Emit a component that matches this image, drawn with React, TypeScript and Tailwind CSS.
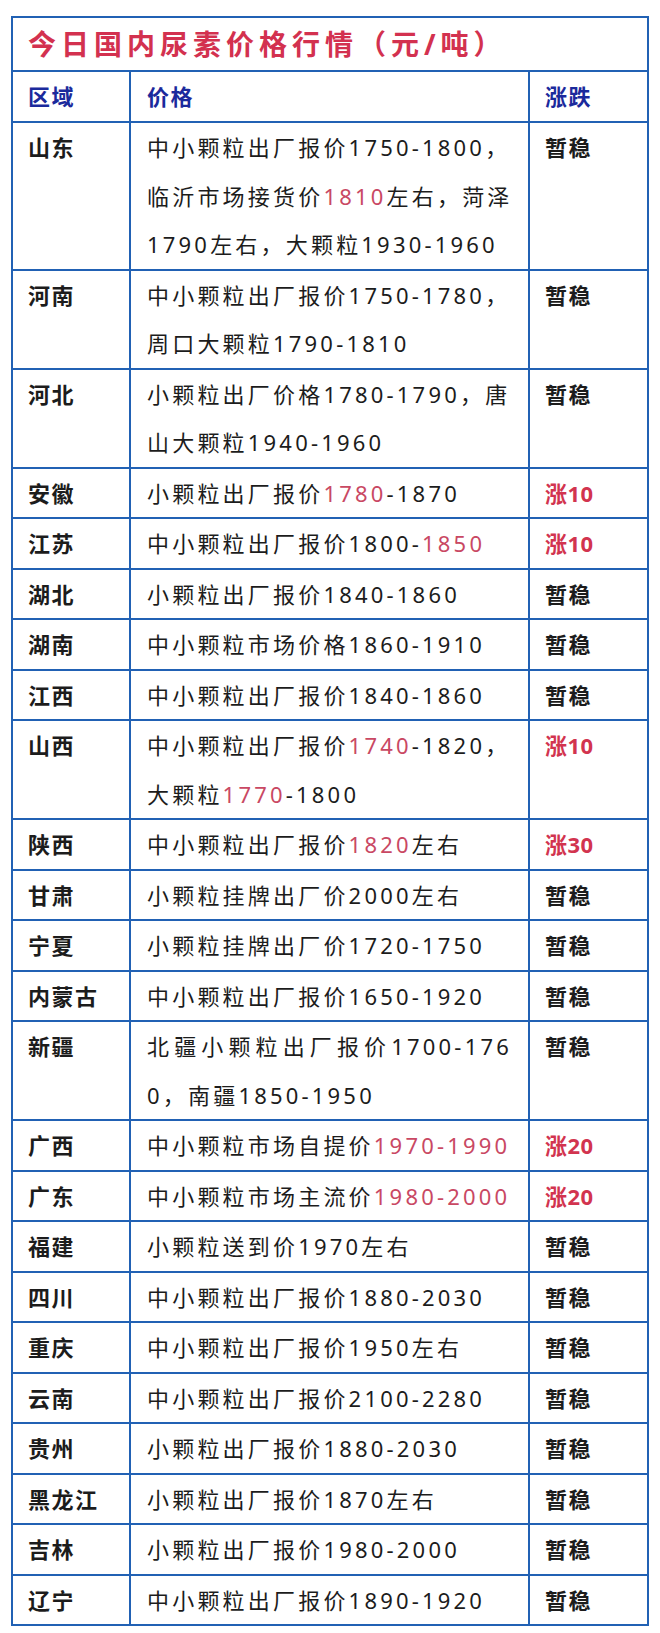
type Seg = string | { red: string };

interface Row {
  region: string;
  lines: Seg[][];
  change: string;
  justifyFirst?: boolean;
}

const rows: Row[] = [
  {
    region: "山东",
    lines: [
      ["中小颗粒出厂报价1750-1800，"],
      ["临沂市场接货价", { red: "1810" }, "左右，菏泽"],
      ["1790左右，大颗粒1930-1960"],
    ],
    change: "暂稳",
  },
  {
    region: "河南",
    lines: [["中小颗粒出厂报价1750-1780，"], ["周口大颗粒1790-1810"]],
    change: "暂稳",
  },
  {
    region: "河北",
    lines: [["小颗粒出厂价格1780-1790，唐"], ["山大颗粒1940-1960"]],
    change: "暂稳",
  },
  {
    region: "安徽",
    lines: [["小颗粒出厂报价", { red: "1780" }, "-1870"]],
    change: "涨10",
  },
  {
    region: "江苏",
    lines: [["中小颗粒出厂报价1800-", { red: "1850" }]],
    change: "涨10",
  },
  { region: "湖北", lines: [["小颗粒出厂报价1840-1860"]], change: "暂稳" },
  { region: "湖南", lines: [["中小颗粒市场价格1860-1910"]], change: "暂稳" },
  { region: "江西", lines: [["中小颗粒出厂报价1840-1860"]], change: "暂稳" },
  {
    region: "山西",
    lines: [
      ["中小颗粒出厂报价", { red: "1740" }, "-1820，"],
      ["大颗粒", { red: "1770" }, "-1800"],
    ],
    change: "涨10",
  },
  {
    region: "陕西",
    lines: [["中小颗粒出厂报价", { red: "1820" }, "左右"]],
    change: "涨30",
  },
  { region: "甘肃", lines: [["小颗粒挂牌出厂价2000左右"]], change: "暂稳" },
  { region: "宁夏", lines: [["小颗粒挂牌出厂价1720-1750"]], change: "暂稳" },
  { region: "内蒙古", lines: [["中小颗粒出厂报价1650-1920"]], change: "暂稳" },
  {
    region: "新疆",
    lines: [["北疆小颗粒出厂报价1700-176"], ["0，南疆1850-1950"]],
    change: "暂稳",
    justifyFirst: true,
  },
  {
    region: "广西",
    lines: [["中小颗粒市场自提价", { red: "1970-1990" }]],
    change: "涨20",
  },
  {
    region: "广东",
    lines: [["中小颗粒市场主流价", { red: "1980-2000" }]],
    change: "涨20",
  },
  { region: "福建", lines: [["小颗粒送到价1970左右"]], change: "暂稳" },
  { region: "四川", lines: [["中小颗粒出厂报价1880-2030"]], change: "暂稳" },
  { region: "重庆", lines: [["中小颗粒出厂报价1950左右"]], change: "暂稳" },
  { region: "云南", lines: [["中小颗粒出厂报价2100-2280"]], change: "暂稳" },
  { region: "贵州", lines: [["小颗粒出厂报价1880-2030"]], change: "暂稳" },
  { region: "黑龙江", lines: [["小颗粒出厂报价1870左右"]], change: "暂稳" },
  { region: "吉林", lines: [["小颗粒出厂报价1980-2000"]], change: "暂稳" },
  { region: "辽宁", lines: [["中小颗粒出厂报价1890-1920"]], change: "暂稳" },
];

function PriceLine({ segs, justify }: { segs: Seg[]; justify?: boolean }) {
  return (
    <div
      className={
        justify
          ? "h-[48.5px] leading-[48.5px] [text-align-last:justify]"
          : "h-[48.5px] whitespace-nowrap leading-[48.5px]"
      }
    >
      {segs.map((s, i) =>
        typeof s === "string" ? (
          <span key={i}>{s}</span>
        ) : (
          <span className="text-[#c94863]" key={i}>
            {s.red}
          </span>
        ),
      )}
    </div>
  );
}

export default function App() {
  return (
    <div
      className="min-h-[1633px] bg-white pt-[16px]"
      style={{ fontFamily: '"Noto Sans", "Noto Sans CJK SC", sans-serif' }}
    >
      <div className="ml-[11px] w-[638px] border-2 border-[#2161b4]">
        <div className="h-[52px] pl-[15px] text-[28px] font-bold leading-[52px] tracking-[5px] text-[#d3314f]">
          今日国内尿素价格行情（元/吨）
        </div>

        <div className="flex h-[51px] border-t-2 border-[#2161b4] text-[22px] font-bold leading-[49px] tracking-[1.5px] text-[#1b2a9c]">
          <div className="w-[118px] border-r-2 border-[#2161b4] pl-[15px]">
            区域
          </div>
          <div className="w-[399px] border-r-2 border-[#2161b4] pl-[16px]">
            价格
          </div>
          <div className="flex-1 pl-[15px]">涨跌</div>
        </div>

        {rows.map((row) => {
          const up = row.change.startsWith("涨");
          return (
            <div
              className="flex border-t-2 border-[#2161b4] text-[22px] text-[#1c1c1c]"
              key={row.region}
            >
              <div className="w-[118px] border-r-2 border-[#2161b4] pl-[15px] font-bold leading-[48.5px] tracking-[1.5px]">
                {row.region}
              </div>
              <div className="w-[399px] border-r-2 border-[#2161b4] px-[16px] tracking-[3.2px]">
                {row.lines.map((segs, i) => (
                  <PriceLine
                    justify={row.justifyFirst && i === 0}
                    key={i}
                    segs={segs}
                  />
                ))}
              </div>
              <div
                className={
                  up
                    ? "flex-1 pl-[15px] font-bold leading-[48.5px] tracking-[0.5px] text-[#d2344f]"
                    : "flex-1 pl-[15px] font-bold leading-[48.5px] tracking-[1.5px]"
                }
              >
                {row.change}
              </div>
            </div>
          );
        })}
      </div>
    </div>
  );
}
